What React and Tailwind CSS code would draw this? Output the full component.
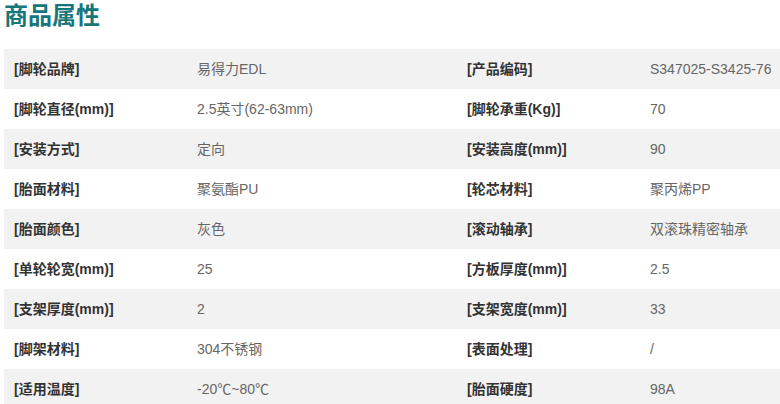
const ROWS = [
  ["[脚轮品牌]", "易得力EDL", "[产品编码]", "S347025-S3425-76"],
  ["[脚轮直径(mm)]", "2.5英寸(62-63mm)", "[脚轮承重(Kg)]", "70"],
  ["[安装方式]", "定向", "[安装高度(mm)]", "90"],
  ["[胎面材料]", "聚氨酯PU", "[轮芯材料]", "聚丙烯PP"],
  ["[胎面颜色]", "灰色", "[滚动轴承]", "双滚珠精密轴承"],
  ["[单轮轮宽(mm)]", "25", "[方板厚度(mm)]", "2.5"],
  ["[支架厚度(mm)]", "2", "[支架宽度(mm)]", "33"],
  ["[脚架材料]", "304不锈钢", "[表面处理]", "/"],
  ["[适用温度]", "-20℃~80℃", "[胎面硬度]", "98A"],
];

const App = () => {
  return (
    <div
      className="w-[780px] h-[404px] overflow-hidden bg-white"
      style={{ fontFamily: '"Liberation Sans", Arial, "Noto Sans CJK SC", sans-serif' }}
    >
      <h2 className="pl-[4px] pt-[2px] h-[49px] text-[24px] leading-[28px] font-bold text-[#16777a]">
        商品属性
      </h2>
      <div className="ml-[4px]">
        {ROWS.map(([l1, v1, l2, v2], i) => (
          <div
            key={i}
            className={`flex h-[40px] items-center text-[14px] ${i % 2 === 0 ? "bg-[#f2f2f2]" : "bg-white"}`}
          >
            <div className="w-[183px] pl-[10px] font-bold text-[#333]">{l1}</div>
            <div className="w-[270px] pl-[10px] text-[#666]">{v1}</div>
            <div className="w-[183px] pl-[10px] font-bold text-[#333]">{l2}</div>
            <div className="flex-1 pl-[10px] text-[#666] whitespace-nowrap">{v2}</div>
          </div>
        ))}
      </div>
    </div>
  );
};

export default App;
